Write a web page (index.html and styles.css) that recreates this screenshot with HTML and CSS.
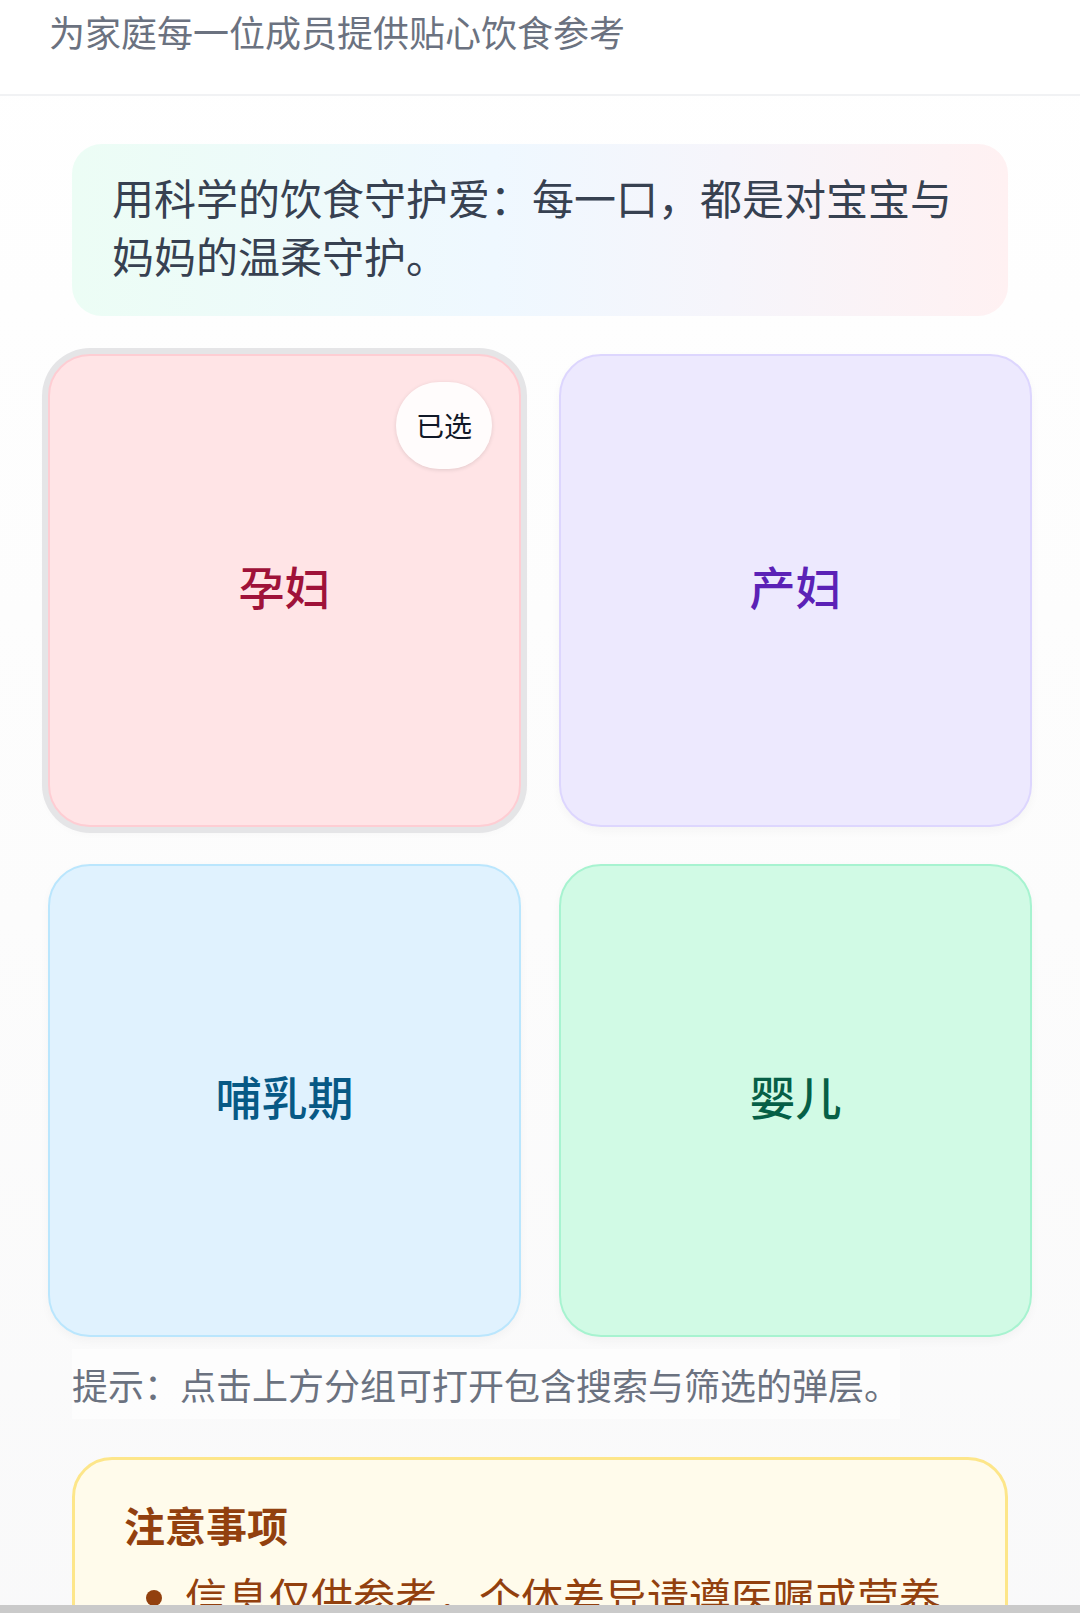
FILE: index.html
```html
<!DOCTYPE html>
<html lang="zh-CN">
<head>
<meta charset="utf-8">
<title>家庭饮食参考</title>
<link rel="stylesheet" href="styles.css">
</head>
<body>
<header class="top">
  <p class="subtitle">为家庭每一位成员提供贴心饮食参考</p>
</header>
<main class="main">
  <section class="banner">用科学的饮食守护爱：每一口，都是对宝宝与妈妈的温柔守护。</section>
  <section class="grid">
    <div class="card card-preg selected">
      <span class="badge">已选</span>
      <span class="label">孕妇</span>
    </div>
    <div class="card card-post">
      <span class="label">产妇</span>
    </div>
    <div class="card card-nurse">
      <span class="label">哺乳期</span>
    </div>
    <div class="card card-baby">
      <span class="label">婴儿</span>
    </div>
  </section>
  <p class="hint">提示：点击上方分组可打开包含搜索与筛选的弹层。</p>
  <section class="notice">
    <h2 class="notice-title">注意事项</h2>
    <ul class="notice-list">
      <li>信息仅供参考，个体差异请遵医嘱或营养师建议。</li>
      <li>如有过敏史或特殊疾病，请先咨询专业医生。</li>
    </ul>
  </section>
</main>
<div class="bottom-bar"></div>
</body>
</html>
```
FILE: styles.css
```css
* { box-sizing: border-box; }
html, body { margin: 0; padding: 0; }
body {
  font-family: "Noto Sans CJK SC", "Noto Sans", sans-serif;
  background: linear-gradient(#ffffff 0%, #fcfcfc 50%, #f8f8f9 100%);
  min-height: 1613px;
  color: #374151;
}
.top {
  background: #ffffff;
  border-bottom: 2px solid #f1f2f4;
  padding: 6px 49px 38px;
}
.subtitle {
  margin: 0;
  font-size: 36px;
  line-height: 50px;
  color: #6b7280;
}
.main {
  padding: 48px 48px 0;
}
.banner {
  margin: 0 24px;
  padding: 24px 40px 32px;
  border-radius: 30px;
  background: linear-gradient(90deg, #ecfdf5 0%, #eff8ff 45%, #f6f5fb 70%, #fff1f2 100%);
  font-size: 42px;
  line-height: 58px;
  color: #374151;
}
.grid {
  margin-top: 38px;
  display: grid;
  grid-template-columns: 1fr 1fr;
  gap: 37px 38px;
}
.card {
  position: relative;
  aspect-ratio: 1 / 1;
  border-radius: 42px;
  border: 2px solid;
  display: flex;
  align-items: center;
  justify-content: center;
  box-shadow: 0 4px 10px rgba(0, 0, 0, 0.035);
}
.label {
  font-size: 46px;
  font-weight: 500;
  line-height: 1;
  padding-bottom: 12px;
}
.card-preg { background: #ffe4e6; border-color: #fecdd3; color: #9f1239; }
.card-post { background: #ede9fe; border-color: #ddd6fe; color: #5b21b6; }
.card-nurse { background: #e0f2fe; border-color: #bae6fd; color: #075985; }
.card-baby { background: #d1fae5; border-color: #a7f3d0; color: #065f46; }
.card.selected {
  box-shadow: 0 0 0 6px #e5e5e7, 0 4px 12px rgba(0, 0, 0, 0.04);
}
.badge {
  position: absolute;
  top: 26px;
  right: 27px;
  padding: 24px 20px;
  font-size: 28px;
  line-height: 39px;
  color: #111827;
  background: rgba(255, 255, 255, 0.88);
  border-radius: 9999px;
  box-shadow: 0 1px 4px rgba(0, 0, 0, 0.12);
}
.hint {
  width: fit-content;
  margin: 12px 24px 0;
  padding: 10px 0;
  font-size: 36px;
  line-height: 50px;
  color: #6b7280;
  background: rgba(255, 255, 255, 0.5);
}
.notice {
  margin: 38px 24px 0;
  padding: 36px 49px 40px;
  border: 3px solid #fde68a;
  border-radius: 40px;
  background: #fffbeb;
  color: #92400e;
}
.notice-title {
  margin: 0;
  font-size: 41px;
  line-height: 57px;
  font-weight: 700;
  color: #92400e;
}
.notice-list {
  margin: 14px 0 0;
  padding-left: 61px;
  font-size: 42px;
  line-height: 58px;
  color: #92400e;
}
.bottom-bar {
  position: fixed;
  left: 0;
  right: 0;
  bottom: 0;
  height: 8px;
  background: #cacaca;
}
```
